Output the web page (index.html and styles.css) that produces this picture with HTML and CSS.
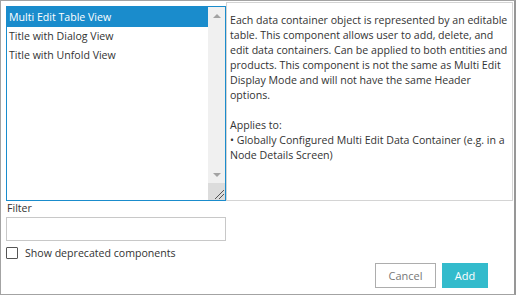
FILE: index.html
```html
<!DOCTYPE html>
<html lang="en">
<head>
    <meta charset="UTF-8">
    <meta name="viewport" content="width=device-width, initial-scale=1.0">
    <title>Add Component</title>
    <link rel="stylesheet" href="styles.css">
</head>
<body>
    <div class="dialog">
        <!-- Component picker -->
        <div class="picker">
            <div class="listbox">
                <ul class="options">
                    <li class="option selected">Multi Edit Table View</li>
                    <li class="option">Title with Dialog View</li>
                    <li class="option">Title with Unfold View</li>
                </ul>
                <div class="scrollbar">
                    <span class="arrow up"></span>
                    <span class="track"></span>
                    <span class="arrow down"></span>
                    <span class="grip">
                        <svg width="17" height="17" viewBox="0 0 17 17">
                            <path d="M7 16 L16 7 M11 16 L16 11" stroke="#555" stroke-width="1" fill="none"/>
                        </svg>
                    </span>
                </div>
            </div>

            <div class="description">
                <p>Each data container object is represented by an editable<br>
                table. This component allows user to add, delete, and<br>
                edit data containers. Can be applied to both entities and<br>
                products. This component is not the same as Multi Edit<br>
                Display Mode and will not have the same Header<br>
                options.</p>
                <p>Applies to:<br>&bull; Globally Configured Multi Edit Data Container (e.g. in a<br>
                Node Details Screen)</p>
            </div>
        </div>

        <!-- Filter -->
        <div class="filter">
            <label for="filter">Filter</label>
            <input type="text" id="filter">
        </div>

        <label class="deprecated">
            <span class="checkbox"></span>
            Show deprecated components
        </label>

        <!-- Buttons -->
        <div class="actions">
            <button class="btn cancel">Cancel</button>
            <button class="btn add">Add</button>
        </div>
    </div>
</body>
</html>
```

FILE: styles.css
```css
/* General Styles */
body {
    font-family: 'Open Sans', 'Noto Sans', sans-serif;
    font-size: 10.6px;
    color: #333;
    margin: 0;
    padding: 0;
    background-color: #fff;
}

.dialog {
    width: 516px;
    height: 295px;
    box-sizing: border-box;
    border: 1px solid #a3a3a3;
    border-right: 2px solid #979797;
    padding: 1px 0 0 5px;
}

/* Picker */
.picker {
    display: flex;
    align-items: flex-start;
}

.listbox {
    width: 220px;
    height: 195px;
    margin-top: 4px;
    box-sizing: border-box;
    border: 1px solid #1a8ccc;
    display: flex;
}

.options {
    flex: 1;
    list-style: none;
    margin: 0;
    padding: 0;
}

.option {
    line-height: 19px;
    padding: 0 2px;
    white-space: nowrap;
}

.option.selected {
    line-height: 20px;
    background-color: #1a8ccc;
    color: #fff;
}

.scrollbar {
    width: 17px;
    display: flex;
    flex-direction: column;
    background-color: #f0f0f0;
}

.arrow {
    height: 17px;
    display: flex;
    align-items: center;
    justify-content: center;
}

.arrow::before {
    content: "";
    border-left: 4px solid transparent;
    border-right: 4px solid transparent;
}

.arrow.up::before {
    border-bottom: 4px solid #a3a3a3;
}

.arrow.down::before {
    border-top: 4px solid #a3a3a3;
}

.track {
    flex: 1;
}

.grip {
    height: 17px;
    background-color: #dcdcdc;
}

.grip svg {
    display: block;
}

/* Description */
.description {
    width: 287px;
    height: 199px;
    box-sizing: border-box;
    border: 1px solid #d4d4d4;
    padding: 10px 0 0 3px;
    line-height: 15px;
    white-space: nowrap;
}

.description p {
    margin: 0 0 15px;
}

/* Filter */
.filter label {
    display: block;
    line-height: 15px;
    padding-left: 1px;
}

.filter input {
    display: block;
    width: 220px;
    height: 24px;
    margin-top: 1px;
    box-sizing: border-box;
    border: 1px solid #c8c8c8;
    border-radius: 0;
    outline: none;
    font: inherit;
}

.deprecated {
    display: flex;
    align-items: center;
    gap: 7px;
    margin-top: 5px;
    height: 13px;
}

.checkbox {
    width: 12px;
    height: 12px;
    border: 1px solid #555;
    border-radius: 1px;
    box-sizing: border-box;
}

/* Buttons */
.actions {
    display: flex;
    justify-content: flex-end;
    gap: 6px;
    padding-right: 26px;
    margin-top: 4px;
}

.btn {
    height: 25px;
    font: inherit;
    font-size: 11px;
    border-radius: 0;
    cursor: pointer;
}

.btn.cancel {
    width: 61px;
    background-color: #fff;
    color: #777;
    border: 1px solid #adadad;
}

.btn.add {
    width: 46px;
    background-color: #33bbcc;
    color: #fff;
    border: 1px solid #33bbcc;
}
```
